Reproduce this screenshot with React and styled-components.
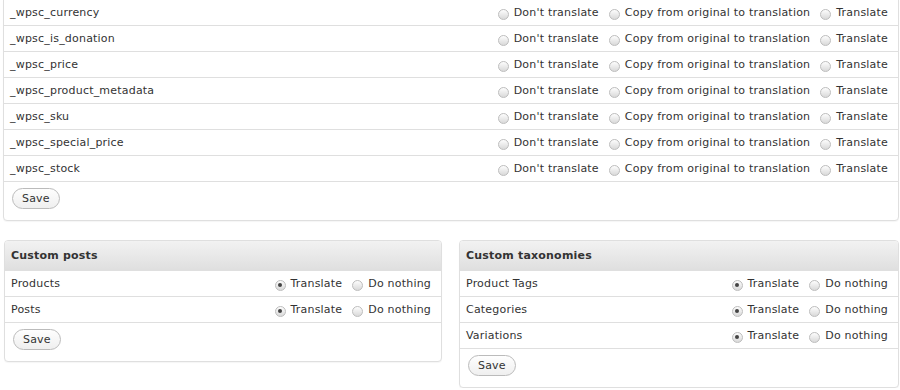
import React from "react";
import styled, { createGlobalStyle } from "styled-components";

const GlobalStyle = createGlobalStyle`
  body {
    margin: 0;
    background: #fff;
    font-family: "DejaVu Sans", Verdana, sans-serif;
    font-size: 11px;
    letter-spacing: 0.2px;
    color: #333;
  }
`;

const Page = styled.div`
  padding: 0 1px 0 3px;
  margin-top: -1px;
`;

const Panel = styled.div`
  border: 1px solid #dfdfdf;
  border-radius: 4px;
  background: #fff;
  box-shadow: 0 1px 1px rgba(0, 0, 0, 0.04);
  width: ${({ width }) => width || "auto"};
  box-sizing: border-box;
`;

const TopPanel = styled(Panel)`
  border-top-left-radius: 0;
  border-top-right-radius: 0;
`;

const Header = styled.div`
  height: 29px;
  line-height: 29px;
  padding: 0 6px;
  font-weight: bold;
  color: #333;
  background: linear-gradient(to bottom, #f2f2f2, #dfdfdf);
  border-bottom: 1px solid #dfdfdf;
  border-radius: 3px 3px 0 0;
`;

const Row = styled.div`
  display: flex;
  align-items: center;
  justify-content: space-between;
  height: 25px;
  padding: 0 10px 0 6px;
  border-bottom: 1px solid #dfdfdf;
`;

const Name = styled.span`
  color: #333;
`;

const Options = styled.div`
  display: flex;
  align-items: center;
  gap: 10px;
`;

const Option = styled.label`
  display: flex;
  align-items: center;
  gap: 5px;
  white-space: nowrap;
`;

const Radio = styled.span`
  position: relative;
  width: 11px;
  height: 11px;
  border-radius: 50%;
  border: 1px solid #bdbdbd;
  box-sizing: border-box;
  background: linear-gradient(to bottom, #fdfdfd, #d9d9d9);
  margin-top: 3px;

  &::after {
    content: "";
    display: ${({ checked }) => (checked ? "block" : "none")};
    position: absolute;
    left: 2.5px;
    top: 2.5px;
    width: 4px;
    height: 4px;
    border-radius: 50%;
    background: #444;
  }
`;

const Footer = styled.div`
  padding: 6px 8px 11px;
`;

const SaveButton = styled.button`
  font-family: "DejaVu Sans", Verdana, sans-serif;
  font-size: 11px;
  letter-spacing: 0.2px;
  color: #333;
  height: 21px;
  padding: 0 9px;
  border: 1px solid #bbb;
  border-radius: 11px;
  background: linear-gradient(to bottom, #fefefe, #efefef);
  line-height: 19px;
`;

const Bottom = styled.div`
  display: flex;
  align-items: flex-start;
  margin-top: 19px;
  padding-left: 1px;
  gap: 17px;
`;

const metaKeys = [
  "_wpsc_currency",
  "_wpsc_is_donation",
  "_wpsc_price",
  "_wpsc_product_metadata",
  "_wpsc_sku",
  "_wpsc_special_price",
  "_wpsc_stock",
];

const Choice = ({ label, checked }) => (
  <Option>
    <Radio checked={checked} />
    {label}
  </Option>
);

const TwoWayPanel = ({ title, items, width }) => (
  <Panel width={width}>
    <Header>{title}</Header>
    {items.map((item) => (
      <Row key={item}>
        <Name>{item}</Name>
        <Options>
          <Choice label="Translate" checked />
          <Choice label="Do nothing" />
        </Options>
      </Row>
    ))}
    <Footer>
      <SaveButton>Save</SaveButton>
    </Footer>
  </Panel>
);

export default function App() {
  return (
    <Page>
      <GlobalStyle />
      <TopPanel>
        {metaKeys.map((key) => (
          <Row key={key}>
            <Name>{key}</Name>
            <Options>
              <Choice label="Don't translate" />
              <Choice label="Copy from original to translation" />
              <Choice label="Translate" />
            </Options>
          </Row>
        ))}
        <Footer>
          <SaveButton>Save</SaveButton>
        </Footer>
      </TopPanel>
      <Bottom>
        <TwoWayPanel title="Custom posts" items={["Products", "Posts"]} width="438px" />
        <TwoWayPanel
          title="Custom taxonomies"
          items={["Product Tags", "Categories", "Variations"]}
          width="440px"
        />
      </Bottom>
    </Page>
  );
}
